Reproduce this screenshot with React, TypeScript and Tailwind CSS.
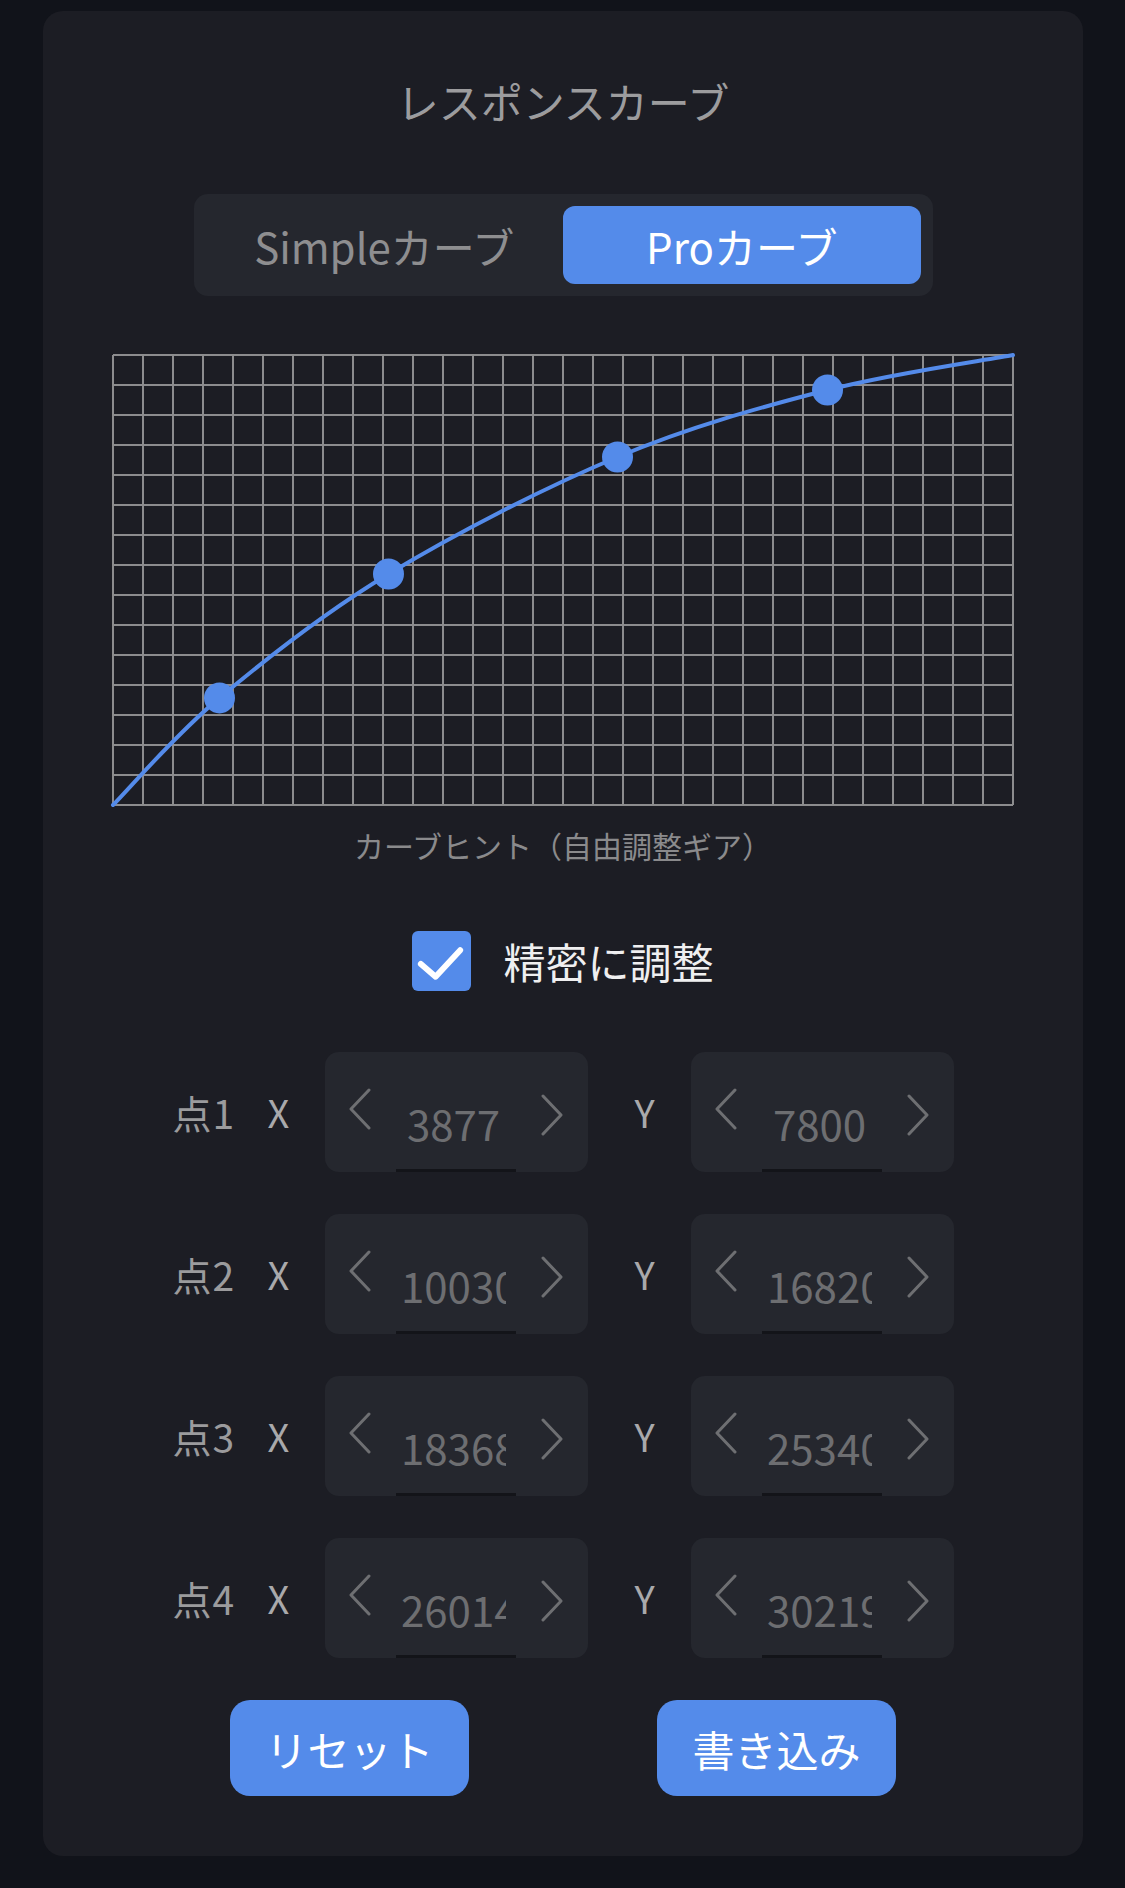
import React from "react";

const BLUE = "#548bea";
const MAX = 32767;

const points: { x: number; y: number }[] = [
  { x: 3877, y: 7800 },
  { x: 10030, y: 16820 },
  { x: 18368, y: 25340 },
  { x: 26014, y: 30219 },
];

const W = 900;
const H = 450;
const OFF = 1;

function px(v: number) {
  return OFF + (v / MAX) * W;
}
function py(v: number) {
  return OFF + H - (v / MAX) * H;
}

function curvePath(): string {
  const pts = [
    { x: 0, y: 0 },
    ...points,
    { x: MAX, y: MAX },
  ].map((p) => ({ x: px(p.x), y: py(p.y) }));
  let d = `M${pts[0].x},${pts[0].y}`;
  for (let i = 0; i < pts.length - 1; i++) {
    const p0 = pts[i - 1] || pts[i];
    const p1 = pts[i];
    const p2 = pts[i + 1];
    const p3 = pts[i + 2] || p2;
    const t = 6;
    const c1x = p1.x + (p2.x - p0.x) / t;
    const c1y = p1.y + (p2.y - p0.y) / t;
    const c2x = p2.x - (p3.x - p1.x) / t;
    const c2y = p2.y - (p3.y - p1.y) / t;
    d += ` C${c1x},${c1y} ${c2x},${c2y} ${p2.x},${p2.y}`;
  }
  return d;
}

function Chart() {
  const vLines = Array.from({ length: 31 }, (_, i) => OFF + i * 30);
  const hLines = Array.from({ length: 16 }, (_, i) => OFF + i * 30);
  return (
    <svg width={902} height={452} viewBox="0 0 902 452" className="overflow-visible block">
      {vLines.map((x) => (
        <line key={"v" + x} x1={x} y1={OFF} x2={x} y2={OFF + H} stroke="#8c8c8e" strokeWidth={2} />
      ))}
      {hLines.map((y) => (
        <line key={"h" + y} x1={OFF} y1={y} x2={OFF + W} y2={y} stroke="#8c8c8e" strokeWidth={2} />
      ))}
      <path d={curvePath()} fill="none" stroke={BLUE} strokeWidth={4} strokeLinecap="round" />
      {points.map((p, i) => (
        <circle key={i} cx={px(p.x)} cy={py(p.y)} r={15.5} fill={BLUE} />
      ))}
    </svg>
  );
}

function ChevronLeft() {
  return (
    <svg width={24} height={42} viewBox="0 0 24 42" className="-translate-y-[3px]">
      <path d="M21 2 L3 21 L21 40" fill="none" stroke="#6e6f72" strokeWidth={3} strokeLinecap="round" strokeLinejoin="round" />
    </svg>
  );
}

function ChevronRight() {
  return (
    <svg width={24} height={42} viewBox="0 0 24 42" className="translate-y-[3px]">
      <path d="M3 2 L21 21 L3 40" fill="none" stroke="#6e6f72" strokeWidth={3} strokeLinecap="round" strokeLinejoin="round" />
    </svg>
  );
}

function Stepper({ value }: { value: number }) {
  return (
    <div className="flex h-[120px] w-[263px] items-center justify-center gap-[24px] rounded-[14px] bg-[#25272e]">
      <ChevronLeft />
      <input
        readOnly
        defaultValue={String(value)}
        className="h-full w-[120px] border-b-[3px] border-[#131419] bg-transparent pl-[5px] pr-[10px] pt-[24px] text-center text-[42px] text-[#6d6e71] outline-none"
        style={{ fontFamily: '"Noto Sans CJK JP", "Noto Sans", sans-serif' }}
      />
      <ChevronRight />
    </div>
  );
}

function PointRow({ idx, x, y }: { idx: number; x: number; y: number }) {
  return (
    <div className="flex items-center">
      <span className="w-[66px] whitespace-nowrap text-[39px] leading-none tracking-[1px] text-[#9b9b9d]">点{idx}</span>
      <span className="ml-[24px] w-[32px] text-center text-[38px] leading-none text-[#a9a9ab]">X</span>
      <div className="ml-[30px]">
        <Stepper value={x} />
      </div>
      <span className="ml-[41px] w-[32px] text-center text-[38px] leading-none text-[#a9a9ab]">Y</span>
      <div className="ml-[30px]">
        <Stepper value={y} />
      </div>
    </div>
  );
}

export default function App() {
  return (
    <div
      className="min-h-[1888px] w-full bg-[#11131a] pl-[43px] pt-[11px]"
      style={{ fontFamily: '"Noto Sans CJK JP", "Noto Sans", sans-serif' }}
    >
      <div className="flex w-[1040px] flex-col items-center rounded-[20px] bg-[#1c1d24] pb-[60px] pt-[66px]">
        <h1 className="text-[42px] font-normal leading-[48px] text-[#9c9c9e]">レスポンスカーブ</h1>

        <div className="mt-[69px] flex h-[102px] w-[739px] rounded-[14px] bg-[#25272e] p-[12px]">
          <div className="flex flex-1 items-center justify-center text-[42px] text-[#8e8e90]">Simpleカーブ</div>
          <div className="flex flex-1 items-center justify-center rounded-[12px] bg-[#548bea] text-[42px] text-white">
            Proカーブ
          </div>
        </div>

        <div className="mt-[58px]">
          <Chart />
        </div>

        <div className="mt-[22px] text-[30px] leading-[34px] text-[#8a8a8c]">カーブヒント（自由調整ギア）</div>

        <div className="mt-[69px] flex h-[60px] items-center">
          <div className="flex h-[60px] w-[59px] items-center justify-center rounded-[6px] bg-[#548bea]">
            <svg width={60} height={60} viewBox="0 0 60 60">
              <path d="M9 33 L24 46 L49 19" fill="none" stroke="white" strokeWidth={6} strokeLinecap="round" strokeLinejoin="round" />
            </svg>
          </div>
          <span className="ml-[32px] text-[42px] leading-none text-[#efeff0]">精密に調整</span>
        </div>

        <div className="mt-[61px] flex flex-col items-center gap-[42px]">
          <PointRow idx={1} x={3877} y={7800} />
          <PointRow idx={2} x={10030} y={16820} />
          <PointRow idx={3} x={18368} y={25340} />
          <PointRow idx={4} x={26014} y={30219} />
        </div>

        <div className="mt-[42px] flex gap-[188px]">
          <button className="flex h-[96px] w-[239px] items-center justify-center rounded-[20px] bg-[#548bea] text-[42px] text-white">
            リセット
          </button>
          <button className="flex h-[96px] w-[239px] items-center justify-center rounded-[20px] bg-[#548bea] text-[42px] text-white">
            書き込み
          </button>
        </div>
      </div>
    </div>
  );
}
